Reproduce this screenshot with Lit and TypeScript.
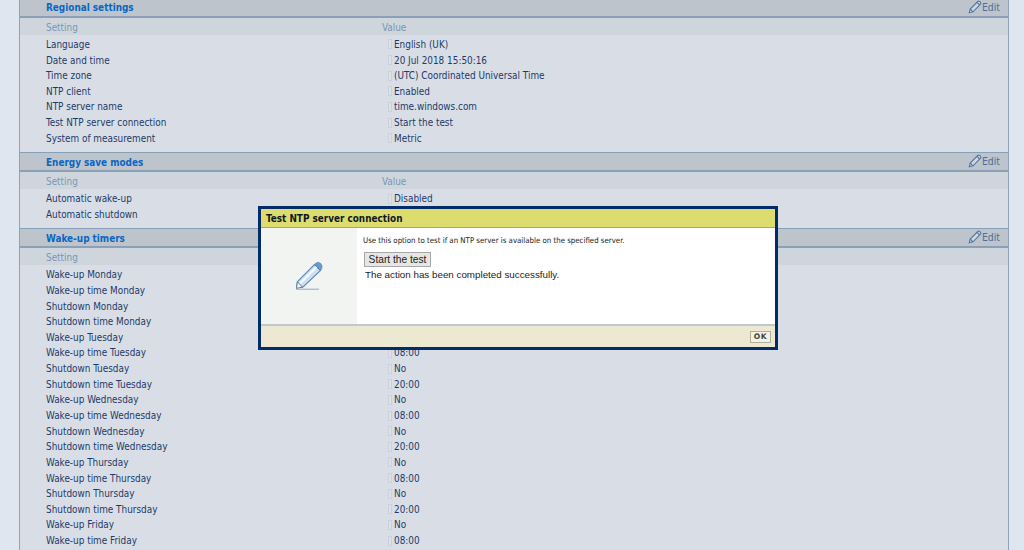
import { LitElement, html, css, svg } from "lit";
import { customElement } from "lit/decorators.js";

type Section = { title: string; rows: [string, string][]; topless?: boolean };

const days = ["Monday", "Tuesday", "Wednesday", "Thursday"];
const timers: [string, string][] = [];
for (const d of days) {
  timers.push([`Wake-up ${d}`, "No"], [`Wake-up time ${d}`, "08:00"], [`Shutdown ${d}`, "No"], [`Shutdown time ${d}`, "20:00"]);
}
timers.push(["Wake-up Friday", "No"], ["Wake-up time Friday", "08:00"]);

const sections: Section[] = [
  {
    title: "Regional settings",
    topless: true,
    rows: [
      ["Language", "English (UK)"],
      ["Date and time", "20 Jul 2018 15:50:16"],
      ["Time zone", "(UTC) Coordinated Universal Time"],
      ["NTP client", "Enabled"],
      ["NTP server name", "time.windows.com"],
      ["Test NTP server connection", "Start the test"],
      ["System of measurement", "Metric"],
    ],
  },
  {
    title: "Energy save modes",
    rows: [
      ["Automatic wake-up", "Disabled"],
      ["Automatic shutdown", "Disabled"],
    ],
  },
  { title: "Wake-up timers", rows: timers },
];

const smallPencil = svg`<svg class="edit-icon" viewBox="0 0 14 14" width="14" height="14" fill="none" stroke="#56779f" stroke-width="1.1">
  <path d="M1.3 12.7 L2.2 9 L9.8 1.5 Q10.8 .8 11.8 1.6 L12.5 2.3 Q13.2 3.2 12.5 4.2 L5 11.8 Z" fill="#cfd8e2"/>
  <path d="M2.2 9 L5 11.8 M9 2.4 L11.7 5"/>
</svg>`;

const bigPencil = svg`<svg viewBox="0 0 30 32" width="30" height="32" fill="none">
  <path d="M2.5 26 L3.5 20.5 L20.5 3.5 L26.5 9.5 L8.5 26.5 Z" fill="#cfe0f2" stroke="#5e8bbd" stroke-width="1.1"/>
  <path d="M6 22.5 L22.5 6" stroke="#f6fbff" stroke-width="2.2"/>
  <path d="M20.5 3.5 Q22.5 1.2 24.5 1.4 Q27.5 2 28 5 Q28.2 7.5 26.5 9.5 Z" fill="#6d9ac8" stroke="#4f7fb2" stroke-width=".8"/>
  <path d="M3.4 20.7 L8.4 26 L2.5 27.5 Z" fill="#f4f5f3" stroke="#5e7f9f" stroke-width="1"/>
  <path d="M2 28.2 H25" stroke="#8fa8bf" stroke-width="1"/>
</svg>`;

@customElement("app-root")
export class AppRoot extends LitElement {
  static styles = css`
    :host {
      display: block;
      position: relative;
      width: 1024px;
      height: 550px;
      overflow: hidden;
      background: #e0e6ef;
      font-family: "DejaVu Sans Condensed", "Noto Sans", sans-serif;
      font-size: 9.9px;
      color: #1d3a68;
    }
    .frame {
      margin-left: 19px;
      width: 990px;
      box-sizing: border-box;
      border-left: 1px solid #8fa2b8;
      border-right: 1px solid #8fa2b8;
      background: #d9dee6;
      height: 550px;
    }
    .head {
      display: flex;
      align-items: center;
      justify-content: space-between;
      box-sizing: border-box;
      height: 20px;
      padding: 0 8px 0 26px;
      background: #bdc4cb;
      border-top: 1px solid #86a0ba;
      border-bottom: 2px solid #8ba0b6;
    }
    .head.topless {
      height: 18px;
      border-top: none;
      padding-bottom: 1px;
    }
    .title {
      font-weight: 700;
      font-size: 9.9px;
      color: #0b66c3;
      padding-top: 2px;
    }
    .topless .title {
      padding-top: 0;
    }
    .edit {
      display: flex;
      align-items: center;
      color: #4e6f9c;
      font-size: 10.4px;
      margin-top: -2px;
    }
    .edit-icon {
      display: block;
    }
    .cols {
      display: grid;
      grid-template-columns: 336px 1fr;
      align-items: center;
      height: 17px;
      padding: 1px 0 0 26px;
      box-sizing: border-box;
      background: #ced5dc;
      color: #7a97b6;
      margin-bottom: 1.6px;
    }
    .row {
      display: grid;
      grid-template-columns: 342px 1fr;
      align-items: center;
      height: 15.65px;
      padding-left: 26px;
      white-space: nowrap;
    }
    .val {
      display: flex;
      align-items: center;
    }
    .mark {
      width: 4px;
      height: 10px;
      margin-right: 2px;
      background: #dde2e9;
      border: 1px solid #cad1da;
      box-sizing: border-box;
    }
    .rows {
      padding-bottom: 6.2px;
    }
    .modal {
      position: absolute;
      left: 258px;
      top: 206px;
      width: 520px;
      height: 144px;
      box-sizing: border-box;
      border: 3px solid #022c66;
      display: flex;
      flex-direction: column;
      background: #fff;
      color: #111;
    }
    .m-title {
      height: 19px;
      flex: none;
      box-sizing: border-box;
      background: #dcdc6f;
      border-bottom: 1px solid #a9a95a;
      padding-left: 5px;
      display: flex;
      align-items: center;
      font-weight: 700;
      font-size: 9.9px;
      color: #101820;
    }
    .m-body {
      flex: 1;
      display: flex;
    }
    .m-side {
      width: 96px;
      flex: none;
      background: #f2f4f2;
      display: flex;
      align-items: center;
      justify-content: center;
      padding-top: 2px;
      box-sizing: border-box;
    }
    .m-main {
      flex: 1;
      padding: 7px 6px;
      font-size: 7.8px;
      color: #222;
    }
    .m-desc {
      height: 17px;
      display: block;
      line-height: 11px;
    }
    .btn {
      display: block;
      box-sizing: border-box;
      margin-left: 1px;
      width: 67px;
      height: 15px;
      padding: 1px 0 0;
      background: #e6e6e4;
      border: 1px solid #a8a8a8;
      font-family: "Liberation Sans", Arial, sans-serif;
      font-size: 10.2px;
      color: #222;
      line-height: 12px;
    }
    .m-result {
      margin: 1px 0 0 2px;
      font-family: "Liberation Sans", Arial, sans-serif;
      font-size: 9.8px;
      line-height: 13px;
      color: #222;
    }
    .m-foot {
      height: 23px;
      flex: none;
      box-sizing: border-box;
      background: #ece8d1;
      border-top: 2px solid #c0c8cf;
      display: flex;
      align-items: center;
      justify-content: flex-end;
      padding-right: 4px;
    }
    .ok {
      box-sizing: border-box;
      width: 21px;
      height: 12px;
      background: #f3f1e3;
      border: 1px solid #b0af9f;
      padding: 0;
      font-family: "DejaVu Sans", sans-serif;
      font-weight: 700;
      font-size: 7.6px;
      letter-spacing: 0.5px;
      line-height: 10px;
      color: #444;
      text-align: center;
    }
  `;

  render() {
    return html`
      <div class="frame">
        ${sections.map(
          (s) => html`
            <section>
              <div class="head ${s.topless ? "topless" : ""}">
                <span class="title">${s.title}</span>
                <span class="edit">${smallPencil}Edit</span>
              </div>
              <div class="cols"><span>Setting</span><span>Value</span></div>
              <div class="rows">
                ${s.rows.map(
                  ([k, v]) => html`
                    <div class="row">
                      <span>${k}</span>
                      <span class="val"><i class="mark"></i>${v}</span>
                    </div>
                  `
                )}
              </div>
            </section>
          `
        )}
      </div>
      <div class="modal">
        <div class="m-title">Test NTP server connection</div>
        <div class="m-body">
          <div class="m-side">${bigPencil}</div>
          <div class="m-main">
            <span class="m-desc">Use this option to test if an NTP server is available on the specified server.</span>
            <button class="btn">Start the test</button>
            <div class="m-result">The action has been completed successfully.</div>
          </div>
        </div>
        <div class="m-foot"><button class="ok">OK</button></div>
      </div>
    `;
  }
}
